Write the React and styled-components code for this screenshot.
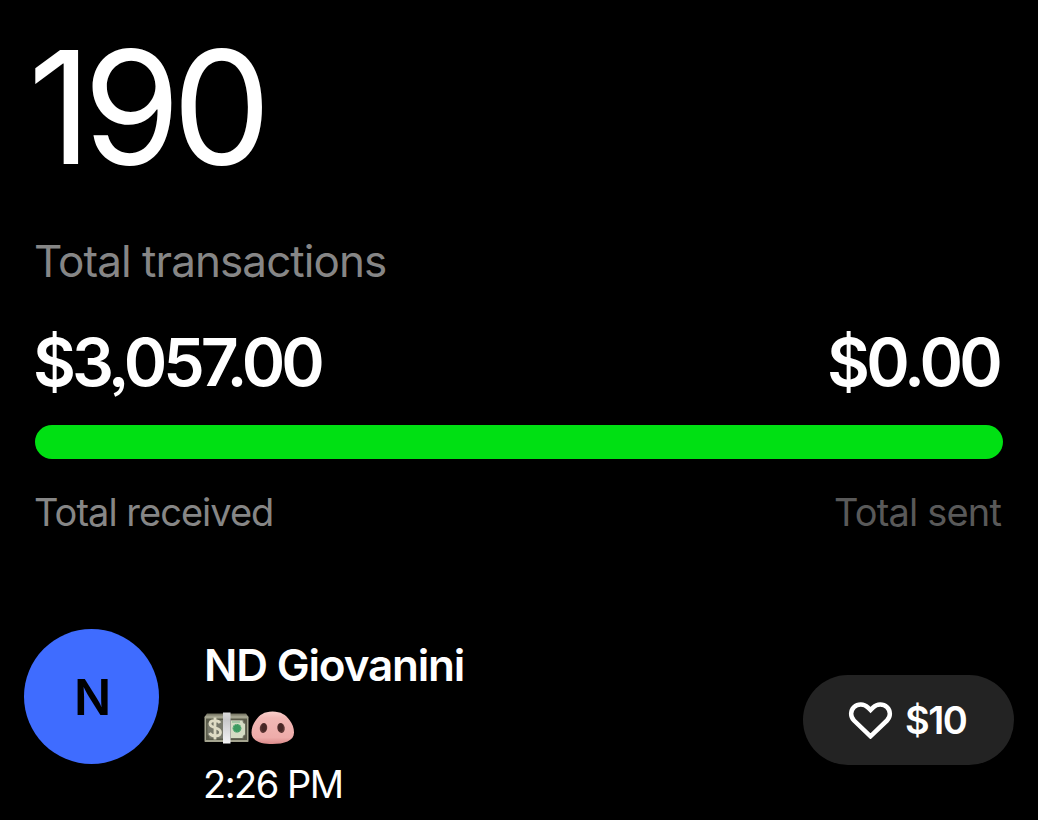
import React from "react";
import styled, { createGlobalStyle } from "styled-components";

const Global = createGlobalStyle`
  body { margin: 0; background: #000; }
  * { box-sizing: border-box; }
`;

const Screen = styled.main`
  width: 1038px;
  height: 820px;
  padding-top: 32px;
  overflow: hidden;
  background: #000;
  color: #fff;
  font-family: Inter, "Liberation Sans", sans-serif;
  font-feature-settings: "ss03";
`;

const Summary = styled.section`
  display: flex;
  flex-direction: column;
  padding: 0 35px;
`;

const Text = styled.span`
  display: block;
  white-space: nowrap;
  font-size: ${(p) => p.$size}px;
  line-height: ${(p) => p.$line}px;
  font-weight: ${(p) => p.$weight || 400};
  letter-spacing: ${(p) => p.$track || 0}px;
  color: ${(p) => p.$color || "#fff"};
`;

const Count = styled(Text)`
  margin: 0 0 0 -7px;
`;

const Caption = styled(Text)`
  margin: 54px 0 0 -1px;
`;

const Split = styled.div`
  display: flex;
  justify-content: space-between;
  margin: ${(p) => p.$top}px ${(p) => p.$right || 0}px 0 ${(p) => p.$left || 0}px;
`;

const Bar = styled.div`
  height: 34px;
  width: 968px;
  margin-top: 33px;
  border-radius: 17px;
  background: #00e013;
`;

const Row = styled.section`
  display: flex;
  align-items: flex-start;
  margin-top: 92px;
  padding: 0 24px;
`;

const Avatar = styled.div`
  display: flex;
  align-items: center;
  justify-content: center;
  width: 135px;
  height: 135px;
  padding: 3px 0 0 2px;
  border-radius: 50%;
  background: #3f6cff;
`;

const Details = styled.div`
  display: flex;
  flex-direction: column;
  flex: 1;
  margin-left: 45px;
  padding-top: 11px;
`;

const Time = styled(Text)`
  margin-left: -1px;
`;

const Emojis = styled.div`
  display: flex;
  gap: 2px;
  height: 34px;
  margin: 21px 0 14px;
`;

const Pill = styled.button`
  display: flex;
  align-items: center;
  gap: 12px;
  width: 211px;
  height: 90px;
  margin: 46px 0 0;
  padding: 0 0 0 45px;
  border: 0;
  border-radius: 45px;
  background: #232323;
  font-family: inherit;
`;

const Cash = () => (
  <svg width="45" height="34" viewBox="0 0 45 34" aria-hidden="true">
    <defs>
      <linearGradient id="cashTop" x1="0" y1="0" x2="0" y2="1">
        <stop offset="0" stopColor="#6d6d5c" />
        <stop offset="1" stopColor="#aaa994" />
      </linearGradient>
      <linearGradient id="cashBand" x1="0" y1="0" x2="0" y2="1">
        <stop offset="0" stopColor="#dcdcdc" />
        <stop offset="0.25" stopColor="#c9c9cb" />
        <stop offset="1" stopColor="#f4f4f6" />
      </linearGradient>
    </defs>
    <path d="M3 2.5H42L44.5 6H.5Z" fill="url(#cashTop)" />
    <rect x=".5" y="5.5" width="44" height="25.5" rx=".8" fill="#a4a48f" />
    <rect x="2" y="7.5" width="41" height="21.5" fill="#5b5c4b" />
    <path d="M5.500 9H39.500Q39.500 12 41.500 12.500V24Q39.500 24.500 39.500 27.500H5.500Q5.500 24.500 3.500 24V12.500Q5.500 12 5.500 9Z" fill="#77786a" />
    <path d="M27 9.500H38.500Q38.500 12.500 41 13V23.500Q38.500 24 38.500 27H27Z" fill="#d5dcc4" />
    <path d="M28 11H36" stroke="#8db794" strokeWidth="1.200" />
    <circle cx="33" cy="17.300" r="4.300" fill="#3c9a60" />
    <circle cx="33" cy="17.300" r="3.900" fill="none" stroke="#81bd91" strokeWidth="1" strokeDasharray="1.200 1.200" />
    <path d="M16 12C14.500 9 6 8.500 6 12.800C6 18 16.500 15.500 16.500 21.200C16.500 26 7.500 26 5.500 22M11 6.500V28.500" fill="none" stroke="#dedbc4" strokeWidth="2.800" />
    <rect x="19" y="1.500" width="7.500" height="31" fill="url(#cashBand)" />
  </svg>
);

const PigNose = () => (
  <svg width="44" height="34" viewBox="0 0 44 34" aria-hidden="true">
    <defs>
      <linearGradient id="nose" x1="0" y1="0" x2="0" y2="1">
        <stop offset="0" stopColor="#fbd0cc" />
        <stop offset="0.2" stopColor="#f2b8b5" />
        <stop offset="0.8" stopColor="#eeacaa" />
        <stop offset="1" stopColor="#da8a8a" />
      </linearGradient>
    </defs>
    <path d="M21.500 .5C30 .5 35 4 38.500 9C41.500 13 43 17 43 21.500C43 30 33 33 21.500 33C10 33 .5 30 .5 21.500C.5 17 2 13 5 9C8.500 4 13 .5 21.500 .5Z" fill="url(#nose)" />
    <ellipse cx="12.500" cy="17" rx="3.700" ry="5" fill="#5c3533" transform="rotate(8 12.500 17)" />
    <ellipse cx="30" cy="17" rx="3.700" ry="5" fill="#5c3533" transform="rotate(-8 30 17)" />
    <ellipse cx="12.900" cy="16.500" rx="2.500" ry="4" fill="#472625" />
    <ellipse cx="29.600" cy="16.500" rx="2.500" ry="4" fill="#472625" />
  </svg>
);

const Heart = () => (
  <svg width="45" height="38" viewBox="0 0 45 38" aria-hidden="true">
    <path
      d="M22.500 9L19.800 6.300C15.800 2.500 9.800 2.500 6 6.100C2.200 9.900 2.200 15.700 6 19.500L22.500 35.300L39 19.500C42.800 15.700 42.800 9.900 39 6.100C35.200 2.500 29.200 2.500 25.200 6.300Z"
      fill="none"
      stroke="#fff"
      strokeWidth="4.500"
    />
  </svg>
);

export default function App() {
  return (
    <>
      <Global />
      <Screen>
        <Summary>
          <Count as="h1" $size={157} $line={150} $track={-8.5}>190</Count>
          <Caption $size={44} $line={50} $track={-0.93} $color="#868686">Total transactions</Caption>
          <Split $top={46} $left={-2} $right={4}>
            <Text $size={66} $line={60} $weight={600} $track={-4}>$3,057.00</Text>
            <Text $size={66} $line={60} $weight={600} $track={-3.8}>$0.00</Text>
          </Split>
          <Bar />
          <Split $top={28} $left={-1} $right={2}>
            <Text $size={38} $line={50} $track={-0.98} $color="#868686">Total received</Text>
            <Text $size={38} $line={50} $track={-0.83} $color="#595959">Total sent</Text>
          </Split>
        </Summary>
        <Row>
          <Avatar>
            <Text $size={49} $line={60} $weight={600} $color="#000">N</Text>
          </Avatar>
          <Details>
            <Text $size={44} $line={50} $weight={600} $track={-1.18}>ND Giovanini</Text>
            <Emojis>
              <Cash />
              <PigNose />
            </Emojis>
            <Time $size={38} $line={50} $track={-1.5}>2:26 PM</Time>
          </Details>
          <Pill>
            <Heart />
            <Text $size={38} $line={50} $weight={600} $track={-1.5}>$10</Text>
          </Pill>
        </Row>
      </Screen>
    </>
  );
}
